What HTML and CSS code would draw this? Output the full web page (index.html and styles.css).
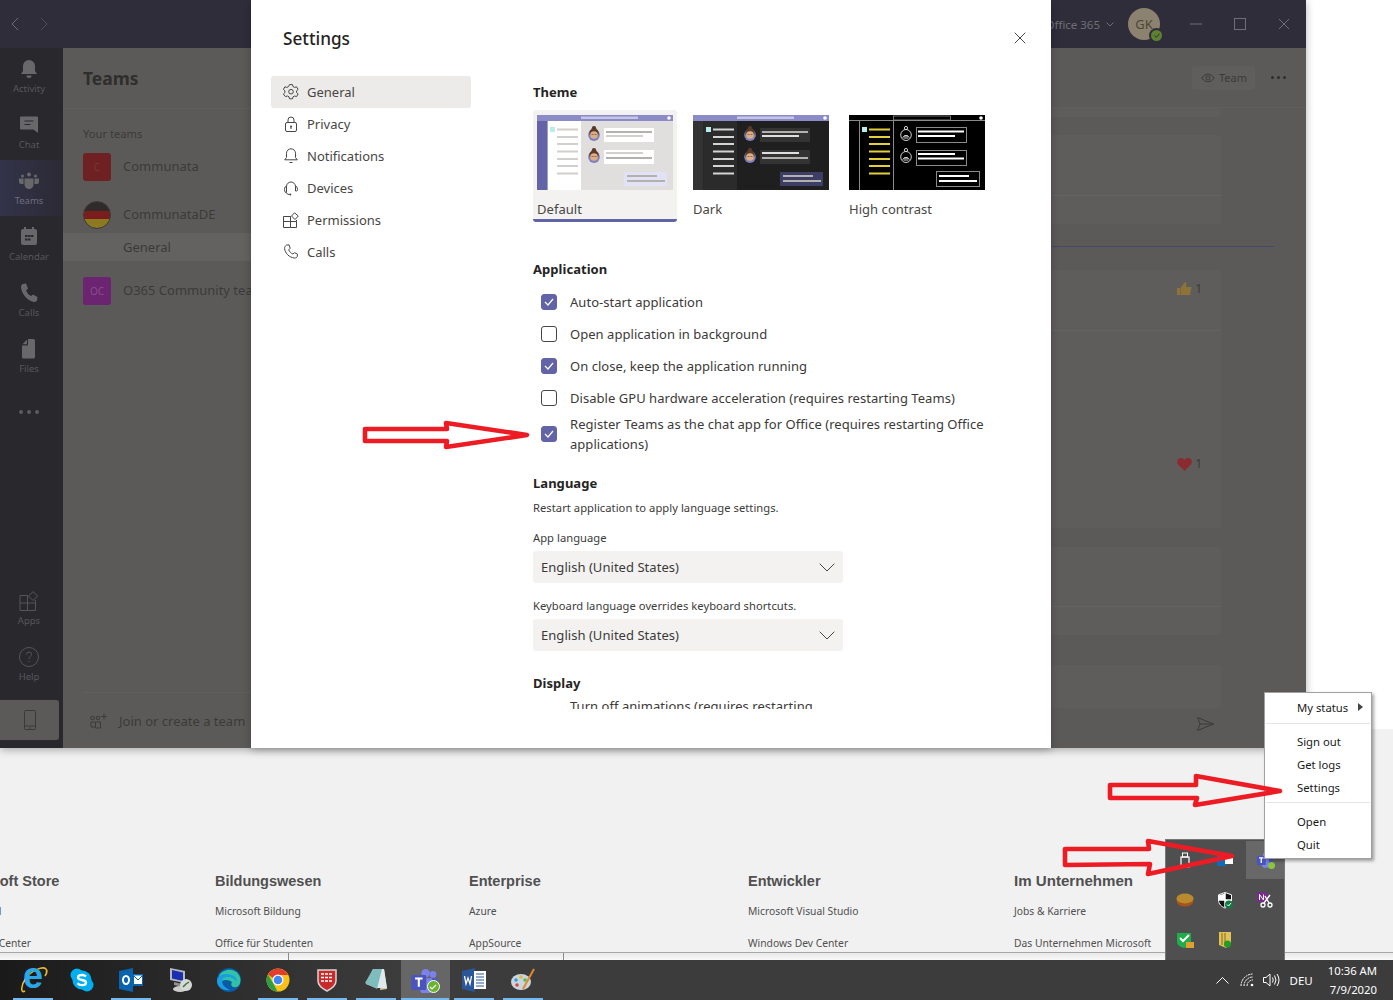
FILE: index.html
```html
<!DOCTYPE html>
<html lang="en">
<head>
<meta charset="utf-8">
<title>Teams settings</title>
<link rel="stylesheet" href="styles.css">
</head>
<body>
<svg class="defs" width="0" height="0" aria-hidden="true">
  <symbol id="avatar" viewBox="0 0 12 15">
    <ellipse cx="6" cy="9" rx="5.800" ry="6" fill="#7f80bd"/>
    <circle cx="6" cy="2.200" r="2.200" fill="#5b3a29"/>
    <circle cx="6" cy="7" r="4.700" fill="#5b3a29"/>
    <ellipse cx="6" cy="9" rx="3.900" ry="3.800" fill="#dcae88"/>
    <path d="M3.500 8.500h2M6.500 8.500h2" stroke="#6a4a38" stroke-width=".7"/>
  </symbol>
  <symbol id="avatar-hc" viewBox="0 0 12 15">
    <circle cx="6" cy="2" r="1.600" fill="none" stroke="#fff" stroke-width=".8"/>
    <ellipse cx="6" cy="9" rx="5.300" ry="5.500" fill="#000" stroke="#fff" stroke-width=".8"/>
    <path d="M2.500 11.500q3.500-4 7 0M4 10h4M3.500 12h5" fill="none" stroke="#fff" stroke-width=".8"/>
  </symbol>
  <symbol id="tm" viewBox="0 0 24 24">
    <circle cx="18.500" cy="6" r="2.700" fill="#7b83eb"/>
    <circle cx="12.500" cy="5" r="3.400" fill="#7b83eb"/>
    <path d="M15 9h7v6.500a3.500 3.500 0 0 1-7 0z" fill="#5059c9"/>
    <path d="M8 9h9.500v9a4.700 4.700 0 0 1-9.500 0z" fill="#7b83eb"/>
    <rect x="1" y="6.500" width="12" height="12" rx="1" fill="#4b53bc"/>
    <path d="M4 9.300h6M7 9.300v6.600" stroke="#fff" stroke-width="1.700" fill="none"/>
  </symbol>
</svg>

<div class="desk">
  <!-- web page behind -->
  <div class="web">
    <div class="web-cols">
      <div class="web-col w1"><h4>Microsoft Store</h4><p>Kontoprofil</p><p>Download Center</p></div>
      <div class="web-col w2"><h4>Bildungswesen</h4><p>Microsoft Bildung</p><p>Office für Studenten</p></div>
      <div class="web-col w3"><h4>Enterprise</h4><p>Azure</p><p>AppSource</p></div>
      <div class="web-col w4"><h4>Entwickler</h4><p>Microsoft Visual Studio</p><p>Windows Dev Center</p></div>
      <div class="web-col w5"><h4>Im Unternehmen</h4><p>Jobs &amp; Karriere</p><p>Das Unternehmen Microsoft</p></div>
    </div>
    <div class="web-scroll"><i class="t1"></i><i class="t2"></i></div>
  </div>

  <!-- Teams window, dimmed -->
  <section class="teams">
    <header class="titlebar">
      <div class="nav-arrows">
        <svg width="8" height="14" viewBox="0 0 8 14"><path d="M7 1 1 7l6 6" class="ln-title"/></svg>
        <svg width="8" height="14" viewBox="0 0 8 14"><path d="m1 1 6 6-6 6" class="ln-title-dim"/></svg>
      </div>
      <div class="title-right">
        <span class="tenant">Office 365</span>
        <svg class="tenant-chev" width="8" height="5" viewBox="0 0 8 5"><path d="m.5.5 3.500 3.500L7.500.5" class="ln-title"/></svg>
        <div class="me">GK<span class="me-dot"><svg width="6" height="5" viewBox="0 0 6 5"><path d="m.5 2.500 1.800 1.800L5.500.7" fill="none" stroke="#2f2d3a"/></svg></span></div>
        <div class="winctl">
          <svg width="12" height="12" viewBox="0 0 12 12"><path d="M0 6h12" class="ln-title"/></svg>
          <svg width="12" height="12" viewBox="0 0 12 12"><rect x=".5" y=".5" width="11" height="11" class="ln-title"/></svg>
          <svg width="12" height="12" viewBox="0 0 12 12"><path d="m1 1 10 10M11 1 1 11" class="ln-title"/></svg>
        </div>
      </div>
    </header>
    <div class="teams-body">
      <nav class="rail">
        <a class="rail-item"><svg viewBox="0 0 20 20" width="20" height="20"><path d="M10 1a6 6 0 0 1 6 6v5l2 3H2l2-3V7a6 6 0 0 1 6-6zM7.500 16.500h5a2.500 2.500 0 0 1-5 0z" class="fl-rail"/></svg><span>Activity</span></a>
        <a class="rail-item"><svg viewBox="0 0 20 20" width="20" height="20"><path d="M1 2.500q0-1 1-1h16q1 0 1 1V18l-4.500-3.500H2q-1 0-1-1z" class="fl-rail"/><path d="M5.500 6h9M5.500 9.500h6" class="ln-cut"/></svg><span>Chat</span></a>
        <a class="rail-item active"><svg viewBox="0 0 20 20" width="20" height="20"><circle cx="10" cy="3.500" r="2" class="fl-rail"/><circle cx="3.500" cy="5" r="1.500" class="fl-rail"/><circle cx="16.500" cy="5" r="1.500" class="fl-rail"/><path d="M5.500 7.500h9v6a4.500 4.500 0 0 1-9 0zM0 7.500h4.500v5.500H2a2 2 0 0 1-2-2zM15.500 7.500H20V11a2 2 0 0 1-2 2h-2.500z" class="fl-rail"/></svg><span>Teams</span></a>
        <a class="rail-item"><svg viewBox="0 0 20 20" width="20" height="20"><path d="M2 4q0-2 2-2h1V0h2v2h6V0h2v2h1q2 0 2 2v12q0 2-2 2H4q-2 0-2-2z" class="fl-rail"/><path d="M6 8h2.500v2H6zM9 8h2.500v2H9zM12 8h2.500v2H12zM6 11.500h2.500v2H6zM9 11.500h2.500v2H9z" class="fl-cut"/></svg><span>Calendar</span></a>
        <a class="rail-item"><svg viewBox="0 0 20 20" width="20" height="20"><path d="M3.500 1 7 .5l2 5-2 2q1.500 4 5 5.500l2-1.500 4.500 2.500-.5 3.500q-1 1.500-3 1.500C8 18 2 10 2 3.500q0-1.500 1.500-2.500z" class="fl-rail"/></svg><span>Calls</span></a>
        <a class="rail-item"><svg viewBox="0 0 20 20" width="20" height="20"><path d="M9 0h5.500q1.500 0 1.500 1.500V18q0 1.500-1.500 1.500h-10Q3 19.500 3 18V6.500h5q1 0 1-1zM3.500 5.200 8 .5v4.700z" class="fl-rail"/></svg><span>Files</span></a>
        <a class="rail-item rail-dots"><i></i><i></i><i></i></a>
        <div class="rail-space"></div>
        <a class="rail-item"><svg viewBox="0 0 20 20" width="20" height="20"><path d="M1 4.500h7.500v15H1zM1 12h15.500v7.500H8.500M8.500 12V4.500M16.500 12V9M9.500 5 14 .7 18.800 5 14 9.500z" class="ln-rail"/></svg><span>Apps</span></a>
        <a class="rail-item"><svg viewBox="0 0 20 20" width="20" height="20"><circle cx="10" cy="10" r="9.500" class="ln-rail"/><path d="M7.500 7.500q0-2.500 2.500-2.500t2.500 2.500c0 2-2.500 2-2.500 4.500M10 14v1" class="ln-rail"/></svg><span>Help</span></a>
        <a class="rail-device"><svg viewBox="0 0 12 20" width="12" height="20"><rect x=".5" y=".5" width="11" height="19" rx="1" class="ln-dark"/><path d="M1 16h10M5 18h2" class="ln-dark"/></svg></a>
      </nav>
      <aside class="list">
        <h2 class="list-title">Teams</h2>
        <div class="list-label">Your teams</div>
        <div class="team t-a"><span class="tile red">C</span>Communata</div>
        <div class="team t-b"><span class="tile flag"></span>CommunataDE</div>
        <div class="channel">General</div>
        <div class="team t-c"><span class="tile purple">OC</span>O365 Community team</div>
        <div class="list-foot">
          <svg width="18" height="16" viewBox="0 0 18 16"><circle cx="2.500" cy="5" r="1.800" class="ln-dark"/><circle cx="8" cy="5" r="1.800" class="ln-dark"/><path d="M5 9H1v5h4M5.500 9h5v6h-5zM14 .5v6M11 3.500h6" class="ln-dark"/></svg>
          <span>Join or create a team</span>
        </div>
      </aside>
      <main class="convo">
        <div class="convo-head">
          <span class="pill"><svg width="14" height="10" viewBox="0 0 14 10"><path d="M.7 5Q7-3 13.300 5 7 13 .7 5z" class="ln-dark"/><circle cx="7" cy="5" r="2" class="ln-dark"/></svg>Team</span>
          <span class="more"><i></i><i></i><i></i></span>
        </div>
        <div class="cards">
          <div class="card c0"></div>
          <div class="card c1"><div class="card-rule"></div></div>
          <div class="new-line"></div>
          <div class="card c2">
            <div class="react r1"><svg width="15" height="14" viewBox="0 0 15 14"><path d="M0 6h3v7H0zM3.500 6 8 0q2 .5 1 5h5.500L13 13H3.500z" fill="#8d7338"/></svg>1</div>
            <div class="card-rule r2"></div>
            <div class="react r3"><svg width="15" height="13" viewBox="0 0 15 13"><path d="M7.500 13 1 6.500C-1.500 3 1.500-.5 4.500 0c1.500.2 2.500 1 3 2 .5-1 1.500-1.800 3-2 3-.5 6 3 3.500 6.500z" fill="#8b2b2f"/></svg>1</div>
          </div>
          <div class="card c3"><div class="card-rule"></div></div>
          <div class="card c4"></div>
        </div>
        <svg class="send" width="17" height="14" viewBox="0 0 17 14"><path d="m.5.5 16 6.500-16 6.500 2.500-6.500zM3 7h13.500" class="ln-dark"/></svg>
      </main>
    </div>
  </section>

  <!-- Settings dialog -->
  <section class="dialog">
    <h1 class="dlg-title">Settings</h1>
    <svg class="dlg-close" width="12" height="12" viewBox="0 0 12 12"><path d="m.7.7 10.600 10.600M11.300.7.700 11.300" class="ln-ink"/></svg>
    <div class="dlg-body">
      <ul class="dlg-nav">
        <li class="on"><svg width="16" height="16" viewBox="0 0 16 16"><path d="M6.500.6h3l.5 2 1.600.8 2-.6 1.500 2.600-1.500 1.400v1.800l1.500 1.400-1.500 2.600-2-.6-1.600.8-.5 2h-3l-.5-2-1.600-.8-2 .6L.4 10l1.500-1.400V6.800L.4 5.400l1.500-2.600 2 .6L5.500 2.600z" class="ln-ink"/><circle cx="8" cy="7.700" r="2.300" class="ln-ink"/></svg>General</li>
        <li><svg width="16" height="16" viewBox="0 0 16 16"><rect x="2.500" y="6.500" width="11" height="9" rx="1.500" class="ln-ink"/><path d="M5 6.500V4a3 3 0 0 1 6 0v2.500" class="ln-ink"/><circle cx="8" cy="10.500" r="1" fill="#484644"/><path d="M8 11v2" class="ln-ink"/></svg>Privacy</li>
        <li><svg width="16" height="16" viewBox="0 0 16 16"><path d="M8 .8a4.500 4.500 0 0 1 4.500 4.500v4.200l1.800 2.300H1.700l1.800-2.300V5.300A4.500 4.500 0 0 1 8 .8zM6.500 14.500h3" class="ln-ink"/></svg>Notifications</li>
        <li><svg width="16" height="16" viewBox="0 0 16 16"><path d="M3.500 12V6.500a4.500 4.500 0 0 1 9 0V9" class="ln-ink"/><path d="M3.500 6.500h-1q-1 1.500-1 3t1 3h1zM12.500 6.500h1q1 1.500 1 3t-1 1.500h-1zM3.500 13q.5 1.500 3 1.500" class="ln-ink"/><circle cx="7.300" cy="14.500" r="1" fill="#484644"/></svg>Devices</li>
        <li><svg width="16" height="16" viewBox="0 0 16 16"><path d="M.5 4.500h7v11h-7zM.5 9.500h13v6h-6M7.500 9.500v-5M13.500 9.500V8M8.500 4 11.500.8 15.300 4l-3.300 3.500z" class="ln-ink"/></svg>Permissions</li>
        <li><svg width="16" height="16" viewBox="0 0 16 16"><path d="M3.500 1 6 .8l1.200 3.400-1.500 1.600c.8 2 2.200 3.400 4.200 4.200l1.600-1.300 3 1.500-.3 2.500c-.5 1-1.500 1.500-2.700 1.300C6 13.500 2 9 1.600 4.500 1.500 3 2.300 1.800 3.500 1z" class="ln-ink"/></svg>Calls</li>
      </ul>
      <div class="dlg-content">
        <h3 class="h-theme">Theme</h3>
        <div class="themes">
          <div class="theme on">
            <svg class="thumb" viewBox="0 0 136 75" width="136" height="75">
              <rect width="136" height="75" fill="#e1dfdd"/><rect width="136" height="6" fill="#8b8cc7"/><rect x="44" y="1.500" width="57" height="2.500" fill="#c5c6e8"/><circle cx="132" cy="3" r="1.800" fill="#fff"/>
              <rect y="6" width="10.500" height="69" fill="#6264a7"/><rect x="11" y="6" width="33" height="69" fill="#fff"/>
              <rect x="13" y="12" width="5" height="5" fill="#b8eeee"/>
              <path d="M20 14.500h21M20 22h21M20 29h21M20 36.500h21M20 44h21M20 51h21M20 58.500h21" stroke="#d2d0ce" stroke-width="2"/>
              <use href="#avatar" x="51" y="11" width="12" height="15"/><use href="#avatar" x="51" y="33" width="12" height="15"/>
              <rect x="67" y="13" width="50" height="14" fill="#fff"/><rect x="67" y="35" width="50" height="14" fill="#fff"/><rect x="87" y="57" width="43" height="14" fill="#e2e2f6"/>
              <path d="M69 17h46M69 43h46M90 61h30M90 66h38" stroke="#b3b0ad" stroke-width="2"/><path d="M69 21h37M69 38h37" stroke="#d2d0ce" stroke-width="2"/>
            </svg>
            <span>Default</span>
          </div>
          <div class="theme">
            <svg class="thumb" viewBox="0 0 136 75" width="136" height="75">
              <rect width="136" height="75" fill="#1f1f1f"/><rect width="136" height="6" fill="#8b8cc7"/><rect x="44" y="1.500" width="57" height="2.500" fill="#c5c6e8"/><circle cx="132" cy="3" r="1.800" fill="#fff"/>
              <rect y="6" width="10.500" height="69" fill="#333"/><rect x="11" y="6" width="33" height="69" fill="#2b2b2b"/>
              <rect x="13" y="12" width="5" height="5" fill="#b8eeee"/>
              <path d="M20 14.500h21M20 22h21M20 29h21M20 36.500h21M20 44h21M20 51h21M20 58.500h21" stroke="#d6d4d2" stroke-width="2"/>
              <use href="#avatar" x="51" y="11" width="12" height="15"/><use href="#avatar" x="51" y="33" width="12" height="15"/>
              <rect x="67" y="13" width="50" height="14" fill="#333"/><rect x="67" y="35" width="50" height="14" fill="#333"/><rect x="87" y="57" width="43" height="14" fill="#3d3e66"/>
              <path d="M69 17h46M69 43h46M90 61h30M90 66h38" stroke="#b3b0ad" stroke-width="2"/><path d="M69 21h37M69 38h37" stroke="#e1dfdd" stroke-width="2"/>
            </svg>
            <span>Dark</span>
          </div>
          <div class="theme">
            <svg class="thumb" viewBox="0 0 136 75" width="136" height="75">
              <rect width="136" height="75" fill="#000"/><path d="M0 5.500h136M10.500 6v69M44.500 6v69" stroke="#8a8a8a"/><rect x="44.500" y="1" width="57" height="4" fill="none" stroke="#8a8a8a" stroke-width=".8"/><circle cx="132" cy="3" r="1.800" fill="#fff"/>
              <rect x="13" y="12" width="5" height="5" fill="#b8eeee"/>
              <path d="M20 14.500h21M20 22h21M20 29h21M20 36.500h21M20 44h21M20 51h21M20 58.500h21" stroke="#e3cf3c" stroke-width="2"/>
              <use href="#avatar-hc" x="51" y="11" width="12" height="15"/><use href="#avatar-hc" x="51" y="33" width="12" height="15"/>
              <rect x="67.500" y="12.500" width="50" height="15" fill="none" stroke="#8a8a8a"/><rect x="67.500" y="35.500" width="50" height="15" fill="none" stroke="#8a8a8a"/><rect x="87.500" y="56.500" width="43" height="15" fill="none" stroke="#8a8a8a"/>
              <path d="M69 16.500h46M69 21h37M69 39h37M69 43.500h46M90 61h30M90 66h38" stroke="#fff" stroke-width="2"/>
            </svg>
            <span>High contrast</span>
          </div>
        </div>

        <h3 class="h-app">Application</h3>
        <div class="opts">
          <label class="opt"><span class="cb on"><svg width="10" height="8" viewBox="0 0 10 8"><path d="m1 4 3 3 5-6" class="ln-check"/></svg></span>Auto-start application</label>
          <label class="opt"><span class="cb"></span>Open application in background</label>
          <label class="opt"><span class="cb on"><svg width="10" height="8" viewBox="0 0 10 8"><path d="m1 4 3 3 5-6" class="ln-check"/></svg></span>On close, keep the application running</label>
          <label class="opt"><span class="cb"></span>Disable GPU hardware acceleration (requires restarting Teams)</label>
          <label class="opt two"><span class="cb on"><svg width="10" height="8" viewBox="0 0 10 8"><path d="m1 4 3 3 5-6" class="ln-check"/></svg></span><span>Register Teams as the chat app for Office (requires restarting Office applications)</span></label>
        </div>

        <h3 class="h-lang">Language</h3>
        <p class="small s-restart">Restart application to apply language settings.</p>
        <p class="small s-app">App language</p>
        <div class="select">English (United States)<svg width="16" height="9" viewBox="0 0 16 9"><path d="m.7.7 7.300 7.300L15.300.7" class="ln-ink"/></svg></div>
        <p class="small s-kbd">Keyboard language overrides keyboard shortcuts.</p>
        <div class="select">English (United States)<svg width="16" height="9" viewBox="0 0 16 9"><path d="m.7.7 7.300 7.300L15.300.7" class="ln-ink"/></svg></div>
        <h3 class="h-disp">Display</h3>
        <label class="opt last"><span class="cb"></span><span class="last-text">Turn off animations (requires restarting Teams)</span></label>
      </div>
    </div>
  </section>

  <!-- Tray overflow -->
  <div class="tray">
    <div class="tray-cell"><svg width="10" height="16" viewBox="0 0 10 16"><rect x="1" y="5" width="8" height="10" fill="none" stroke="#fff" stroke-width="1.200"/><rect x="2.500" y="1" width="5" height="4" fill="none" stroke="#fff"/></svg></div>
    <div class="tray-cell"><svg width="16" height="14" viewBox="0 0 16 14"><rect y="3" width="9" height="10" fill="#0f6cbd"/><rect x="8" y="5" width="8" height="6" fill="#fff"/><rect x="5" width="7" height="5" fill="#28a8ea"/></svg></div>
    <div class="tray-cell on"><svg class="tm" width="18" height="18"><use href="#tm"/></svg><span class="tm-ok"></span></div>
    <div class="tray-cell"><svg width="18" height="14" viewBox="0 0 18 14"><ellipse cx="9" cy="8" rx="8.500" ry="5.500" fill="#a9521b"/><ellipse cx="9" cy="5.500" rx="8.500" ry="5" fill="#b98a2e"/></svg></div>
    <div class="tray-cell"><svg width="16" height="17" viewBox="0 0 16 17"><path d="M8 .5l6.500 2.300V8c0 4-3 6.700-6.500 8-3.500-1.300-6.500-4-6.500-8V2.800z" fill="#111" stroke="#fff"/><path d="M8 1v14M1.500 8h13" stroke="#fff" stroke-width="1.500"/><path d="M8 1.500 2 3.200V8h6zM8 8h6c0 3-3 6-6 7.500z" fill="#fff"/><circle cx="12" cy="12.500" r="4" fill="#107c41"/><path d="m10 12.500 1.500 1.500 2.500-3" stroke="#fff" fill="none"/></svg></div>
    <div class="tray-cell"><svg width="16" height="16" viewBox="0 0 16 16"><rect width="10" height="10" fill="#7b2a8f"/><path d="M2.500 8V2.500L6.500 8V2.500" stroke="#fff" fill="none"/><circle cx="6" cy="13" r="2" fill="none" stroke="#fff" stroke-width="1.300"/><circle cx="13" cy="13" r="2" fill="none" stroke="#fff" stroke-width="1.300"/><path d="m7 11 6-8M12 11 8 4" stroke="#fff" stroke-width="1.300"/></svg></div>
    <div class="tray-cell"><svg width="17" height="17" viewBox="0 0 17 17"><path d="M0 1h14v9c0 3-3 5-7 6-4-1-7-3-7-6z" fill="#1fae4b"/><path d="m3 6 3 3 6-6" stroke="#fff" stroke-width="2" fill="none"/><rect x="9" y="10" width="8" height="6" fill="#e0a030"/></svg></div>
    <div class="tray-cell"><svg width="14" height="17" viewBox="0 0 14 17"><path d="M1 0h12v11l-5 5-7-3z" fill="#e0c25a"/><path d="M4 1v12M7 1v13" stroke="#8a6a1c"/><circle cx="9.500" cy="12" r="3.500" fill="#1f9e20"/></svg></div>
  </div>

  <!-- Context menu -->
  <div class="menu">
    <div class="mi status">My status<i class="mi-arrow"></i></div>
    <hr>
    <div class="mi">Sign out</div>
    <div class="mi">Get logs</div>
    <div class="mi">Settings</div>
    <hr class="hr2">
    <div class="mi">Open</div>
    <div class="mi">Quit</div>
  </div>

  <!-- Taskbar -->
  <footer class="taskbar">
    <div class="apps">
      <div class="app run"><svg class="ie-ring" width="32" height="32" viewBox="0 0 32 32"><path d="M7 27C2 30 3 21 8 14 14 6 25 2 28 5c1 1 1 4-1 7" fill="none" stroke="#e4b92e" stroke-width="1.600"/></svg><span class="ie">e</span></div>
      <div class="app"><svg width="24" height="24" viewBox="0 0 24 24"><circle cx="7" cy="7" r="6.500" fill="#00aff0"/><circle cx="17" cy="17" r="6.500" fill="#00aff0"/><circle cx="12" cy="12" r="9.500" fill="#00aff0"/><path d="M16 8.500Q14.500 7 12 7 8 7 8 9.500c0 3.500 8 1.500 8 5 0 2.300-2.500 2.700-4 2.700q-3 0-4.500-2" stroke="#fff" stroke-width="2.300" fill="none"/></svg></div>
      <div class="app run"><svg width="24" height="24" viewBox="0 0 24 24"><path d="M0 3 14 0v24L0 21z" fill="#0a64ad"/><rect x="13" y="6" width="11" height="12" fill="#0a64ad"/><rect x="15" y="7.500" width="8" height="8.500" fill="#fff"/><path d="m15 8 4 4 4-4" stroke="#0a64ad" fill="none"/><ellipse cx="7" cy="12" rx="3" ry="4" fill="none" stroke="#fff" stroke-width="2"/></svg></div>
      <div class="app"><svg width="24" height="26" viewBox="0 0 24 26"><path d="M2 1l15 3v12L2 13z" fill="#b5b9c2"/><path d="M4 3l11 2.500v8.500L4 11.500z" fill="#1b2fb0"/><path d="M6 15l8 2v3l-8-2z" fill="#8f8f8f"/><ellipse cx="12" cy="22" rx="7" ry="3" fill="#ccc"/><circle cx="18" cy="18" r="6" fill="#d8d8d8"/><path d="m15 20 3-3 3-2" stroke="#2d7d32" stroke-width="1.500" fill="none"/></svg></div>
      <div class="app"><svg width="24" height="24" viewBox="0 0 24 24"><circle cx="12" cy="12" r="12" fill="#0c59a4"/><path d="M2 8C5 1 17-1 22 7c3 5 1 12-3 12-4 1-6-2-4-5-4-3-10-3-13 2z" fill="#2fc4a7"/><path d="M0 13c0-5 5-7 9-7 5 0 11 2 11 8-2-3-5-5-9-5-6 0-8 5-3 10 1 1 3 2 5 3C6 23 0 19 0 13z" fill="#1b9de2"/></svg></div>
      <div class="app run"><svg width="24" height="24" viewBox="0 0 24 24"><circle cx="12" cy="12" r="11.500" fill="#fbc116"/><path d="M2 6.500A11.500 11.500 0 0 1 22.300 7H12a5.500 5.500 0 0 0-5 3z" fill="#e33b2e"/><path d="M2 6.500l5 8.500 4.500 8.500A11.500 11.500 0 0 1 2 6.500z" fill="#2b9f45"/><circle cx="12" cy="12" r="5.500" fill="#fff"/><circle cx="12" cy="12" r="4.300" fill="#4285f4"/></svg></div>
      <div class="app run"><svg width="20" height="24" viewBox="0 0 20 24"><path d="M1 2h18v11c0 5-5 8-9 10-4-2-9-5-9-10z" fill="#c92a2a" stroke="#d5d5d5" stroke-width="1.500"/><path d="M4 6h12M4 9.500h12M4 13h12" stroke="#fff" stroke-width="1.600" stroke-dasharray="3 1"/></svg></div>
      <div class="app run"><svg width="24" height="24" viewBox="0 0 24 24"><path d="M20 1l3 20-7 1z" fill="#d9c89a"/><path d="M9 1h11l3 19H12L2 16z" fill="#dfe9ec"/><path d="M9 1 1 15l12 6L18 1z" fill="#7fbcbc"/></svg></div>
      <div class="app run on"><svg class="tm" width="30" height="26" viewBox="0 0 24 21"><use href="#tm" width="24" height="24"/></svg><span class="tm-ok big"><svg width="8" height="6" viewBox="0 0 8 6"><path d="m1 3 2 2 4-4" fill="none" stroke="#fff" stroke-width="1.200"/></svg></span></div>
      <div class="app run"><svg width="24" height="24" viewBox="0 0 24 24"><path d="M0 3 13 0v24L0 21z" fill="#2b579a"/><rect x="12" y="3" width="12" height="18" fill="#fff"/><path d="M14 6h8M14 9h8M14 12h8M14 15h8M14 18h8" stroke="#2b579a"/><path d="m2.500 8 1.500 8 2-6 2 6 1.500-8" stroke="#fff" stroke-width="1.300" fill="none"/></svg></div>
      <div class="app run"><svg width="24" height="24" viewBox="0 0 24 24"><ellipse cx="10" cy="14" rx="10" ry="8" fill="#c9d6de"/><circle cx="5" cy="12" r="1.800" fill="#3a9ad9"/><circle cx="10" cy="9" r="1.800" fill="#e8b93a"/><circle cx="6" cy="17" r="1.800" fill="#d44"/><circle cx="14" cy="12" r="1.800" fill="#5b5"/><path d="M23 1 12 21" stroke="#e08a2a" stroke-width="2"/></svg></div>
    </div>
    <div class="sys">
      <svg width="13" height="8" viewBox="0 0 13 8"><path d="m.5 7.500 6-6 6 6" class="ln-white"/></svg>
      <svg class="s-wifi" width="14" height="14" viewBox="0 0 14 14"><path d="M1 13A12 12 0 0 1 13 1M4 13a9 9 0 0 1 9-9M7 13a6 6 0 0 1 6-6" class="ln-white-dot"/><circle cx="12" cy="12" r="1.300" fill="#fff"/></svg>
      <svg class="s-vol" width="17" height="14" viewBox="0 0 17 14"><path d="M.5 4.500H3L7 1v12L3 9.500H.5zM9.500 4.500q1.500 2.500 0 5M11.500 2.500q3 4.500 0 9M14 1q4 6 0 12" class="ln-white"/></svg>
      <span class="s-lang">DEU</span>
      <div class="clock"><span>10:36 AM</span><span>7/9/2020</span></div>
    </div>
  </footer>

  <!-- Red annotation arrows -->
  <svg class="arrows" width="1393" height="1000" viewBox="0 0 1393 1000" aria-hidden="true">
    <path d="M365 429h82l-1-6 81 12-81 12 1-6h-82z"/>
    <path d="M1110 785h86v-9l84 15-85 14 2-7h-87z"/>
    <path d="M1065 849h84l-1-8 84 15-84 18 2-10-85 1z"/>
  </svg>
</div>
</body>
</html>
```

FILE: styles.css
```css
* { box-sizing: border-box; }
html, body { margin: 0; padding: 0; background: #fff; }
body { font-family: "Noto Sans", "Open Sans", sans-serif; color: #252423; }
.defs { position: absolute; }
.desk { position: relative; width: 1393px; height: 1000px; overflow: hidden; background: #fff; }
h1, h2, h3, h4, p, ul { margin: 0; padding: 0; font-weight: normal; }
ul { list-style: none; }

/* stroke helpers */
.ln-title { fill: none; stroke: #6f6e76; }
.ln-title-dim { fill: none; stroke: #4f4e58; }
.ln-rail { fill: none; stroke: #565559; stroke-width: 1; }
.ln-dark { fill: none; stroke: #3b3a39; }
.ln-ink { fill: none; stroke: #484644; }
.ln-check { fill: none; stroke: #fff; stroke-width: 1.200; }
.ln-white { fill: none; stroke: #fff; }
.ln-white-dot { fill: none; stroke: #fff; stroke-dasharray: 2 .7; }
.ln-cut { fill: none; stroke: #29282d; stroke-width: 1.200; }
.fl-rail { fill: #68686b; }
.fl-cut { fill: #29282d; }

/* page behind */
.web { position: absolute; left: 0; right: 0; top: 729px; height: 231px; background: #f1f1f1; }
.web-cols { display: flex; padding-top: 142px; margin-left: -47px; }
.web-col h4 { font-family: "Liberation Sans", sans-serif; font-weight: bold; font-size: 14.500px; line-height: 20px; color: #505050; white-space: nowrap; }
.web-col p { font-size: 10.300px; line-height: 14px; color: #505050; white-space: nowrap; }
.web-col p:nth-of-type(1) { margin-top: 13px; }
.web-col p:nth-of-type(2) { margin-top: 18px; }
.w1 { width: 262px; } .w2 { width: 254px; } .w3 { width: 279px; } .w4 { width: 266px; }
.w1 p { margin-left: -6px; }
.web-col.w5 h4 { font-size: 15.100px; }
.web-scroll { position: absolute; left: 0; right: 0; bottom: 0; height: 8px; border-top: 1px solid #a6a6a6; background: linear-gradient(#e9e9e9, #f8f8f8); }
.web-scroll i { position: absolute; top: 0; bottom: 0; width: 1px; background: #8c8c8c; }
.t1 { left: 288px; } .t2 { left: 563px; }

/* Teams window */
.teams { position: absolute; left: 0; top: 0; width: 1306px; height: 748px; display: flex; flex-direction: column; background: #5b5a58; box-shadow: 0 2px 8px rgba(0,0,0,.3); }
.titlebar { height: 48px; background: #2f2d3a; display: flex; align-items: center; justify-content: space-between; padding-left: 11px; color: #6f6e76; }
.nav-arrows { display: flex; gap: 21px; }
.title-right { display: flex; align-items: center; }
.tenant { font-size: 11.500px; }
.tenant-chev { margin: 0 14px 0 6px; }
.me { width: 32px; height: 32px; border-radius: 50%; background: #8c8270; color: #4f4636; font-size: 13px; display: flex; align-items: center; justify-content: center; position: relative; }
.me-dot { position: absolute; right: -2px; bottom: -1px; width: 11px; height: 11px; border-radius: 50%; background: #5d8131; box-shadow: 0 0 0 2px #2f2d3a; display: flex; align-items: center; justify-content: center; }
.winctl { display: flex; gap: 32px; margin: 0 16px 0 30px; }
.teams-body { flex: 1; display: flex; min-height: 0; }
.rail { width: 63px; background: #29282d; display: flex; flex-direction: column; }
.rail-item { height: 56px; width: 58px; display: flex; flex-direction: column; align-items: center; padding-top: 11px; font-size: 9.500px; color: #58575c; line-height: 13px; gap: 3px; }
.rail-item.active { width: 63px; padding-right: 5px; background: linear-gradient(90deg, #33334a, #2b2a34); color: #6c6d80; }
.rail-dots { flex-direction: row; justify-content: center; align-items: flex-start; padding-top: 26px; gap: 4px; }
.rail-dots i { width: 4px; height: 4px; border-radius: 50%; background: #5c5b60; }
.rail-space { flex: 1; }
.rail-device { height: 40px; width: 59px; margin: 8px 0 8px; background: #5b5a59; border-radius: 0 3px 3px 0; display: flex; align-items: center; justify-content: center; }
.list { width: 320px; display: flex; flex-direction: column; padding-left: 20px; color: #3b3a39; position: relative; }
.list-title { font-size: 17.500px; font-weight: 700; line-height: 24px; margin-top: 18px; padding-bottom: 18px; margin-left: -20px; padding-left: 20px; border-bottom: 1px solid #605f5d; color: #2f2e2d; }
.list-label { font-size: 11.200px; line-height: 16px; margin-top: 17px; }
.team { display: flex; align-items: center; gap: 12px; font-size: 13px; white-space: nowrap; height: 28px; padding-bottom: 2px; }
.t-a { margin-top: 11px; }
.t-b { margin-top: 20px; }
.t-c { margin-top: 16px; }
.tile { width: 28px; height: 28px; border-radius: 3px; display: flex; align-items: center; justify-content: center; font-size: 10px; flex: none; }
.team > .tile { margin-top: 2px; }
.red { background: #6e2022; color: #7f3436; }
.purple { background: #6b2470; color: #8a4a8e; }
.team > .flag { border-radius: 50%; background: linear-gradient(#2f2b28 0 35%, #7a1d1c 35% 65%, #8c7a20 65%); border: 1px solid #3b3a39; }
.channel { margin: 4px 0 0 -20px; padding-left: 60px; height: 28px; line-height: 28px; font-size: 13px; background: #636260; }
.list-foot { margin-top: auto; margin-left: 0; height: 56px; border-top: 1px solid #605f5d; display: flex; align-items: center; gap: 11px; padding-left: 7px; font-size: 13px; white-space: nowrap; }
.convo { flex: 1; display: flex; flex-direction: column; position: relative; }
.convo-head { height: 60px; display: flex; align-items: center; justify-content: flex-end; gap: 16px; padding: 0 20px 0 0; border-bottom: 1px solid #605f5d; }
.pill { height: 24px; padding: 0 8px 0 9px; width: 63px; background: #5f5e5c; border-radius: 3px; display: flex; align-items: center; gap: 4px; font-size: 11px; color: #3b3a39; }
.more { display: flex; gap: 3px; }
.more i { width: 3px; height: 3px; border-radius: 50%; background: #2e2d2c; }
.cards { padding-right: 85px; }
.card { background: #5e5d5b; border-radius: 3px; position: relative; }
.card-rule { position: absolute; left: 0; right: 0; height: 1px; background: #646361; }
.c0 { height: 9px; margin-top: 0; }
.c1 { height: 89px; margin-top: 18px; }
.c1 .card-rule { top: 60px; }
.new-line { height: 1px; background: #47476e; margin: 22px -53px 0 0; }
.c2 { height: 258px; margin-top: 23px; }
.r2 { top: 60px; }
.react { position: absolute; left: 0; right: 0; display: flex; justify-content: flex-end; align-items: center; gap: 3px; padding-right: 19px; font-size: 12px; color: #3b3a39; line-height: 16px; }
.r1 { top: 11px; }
.r3 { top: 186px; }
.c3 { height: 88px; margin-top: 19px; }
.c3 .card-rule { top: 59px; }
.c4 { height: 43px; margin-top: 30px; }
.send { position: absolute; right: 92px; bottom: 17px; }

/* Dialog */
.dialog { position: absolute; left: 251px; top: 0; width: 800px; height: 748px; background: #fff; padding: 0 20px; box-shadow: 0 2px 8px rgba(0,0,0,.25); }
.dlg-title { font-size: 17.200px; font-weight: 500; line-height: 26px; padding: 26px 0 0 12px; color: #252423; }
.dlg-close { position: absolute; right: 25px; top: 32px; }
.dlg-body { display: flex; margin-top: 24px; height: 633px; }
.dlg-nav { width: 200px; flex: none; font-size: 13px; color: #484644; }
.dlg-nav li { height: 32px; display: flex; align-items: center; gap: 8px; padding-left: 12px; border-radius: 3px; }
.dlg-nav li.on { background: #edebe9; }
.dlg-content { margin-left: 62px; width: 465px; overflow: hidden; font-size: 13px; letter-spacing: .04px; color: #3b3a39; }
h3 { font-size: 13px; font-weight: 700; line-height: 20px; color: #252423; }
.h-theme { margin-top: 6px; }
.themes { display: flex; gap: 12px; margin-top: 8px; }
.theme { width: 144px; height: 112px; padding: 5px 4px 0; border-radius: 3px; border-bottom: 3px solid transparent; line-height: 20px; color: #484644; }
.theme.on { background: #f3f2f1; border-bottom-color: #6264a7; color: #484644; }
.thumb { display: block; margin-bottom: 9px; }
.h-app { margin-top: 37px; }
.opts { margin-top: 7px; display: flex; flex-direction: column; }
.opt { display: flex; align-items: center; height: 32px; padding-left: 8px; white-space: nowrap; }
.cb { width: 16px; height: 16px; flex: none; border: 1px solid #484644; border-radius: 3px; margin-right: 13px; display: flex; align-items: center; justify-content: center; }
.cb.on { background: #6264a7; border-color: #6264a7; }
.opt.two { height: 40px; margin-top: 0; white-space: normal; line-height: 20px; }
.h-lang { margin-top: 19px; }
.small { font-size: 11.200px; line-height: 16px; color: #3b3a39; }
.s-restart { margin-top: 7px; }
.s-app { margin-top: 14px; }
.s-kbd { margin-top: 15px; }
.select { width: 310px; height: 32px; margin-top: 5px; padding: 0 8px; background: #f3f2f1; border-radius: 3px; display: flex; align-items: center; justify-content: space-between; color: #3b3a39; }
.h-disp { margin-top: 22px; }
.opt.last { height: 40px; margin-top: 3px; align-items: flex-start; white-space: normal; line-height: 20px; }
.opt.last .cb { visibility: hidden; }
.last-text { width: 262px; }

/* Tray overflow */
.tray { position: absolute; left: 1165px; top: 839px; width: 120px; height: 121px; background: #4f4f4f; box-shadow: inset 1px 0 #777, inset -1px 0 #777, inset 0 1px #777; padding-top: 1px; display: grid; grid-template-columns: repeat(3, 40px); grid-auto-rows: 40px; }
.tray-cell { display: flex; align-items: center; justify-content: center; position: relative; }
.tray-cell.on { background: #686868; margin: 1px; }
.tm-ok { position: absolute; right: 9px; bottom: 10px; width: 7px; height: 7px; border-radius: 50%; background: #8cc63f; }
.tm-ok.big { right: 10px; bottom: 7px; width: 13px; height: 13px; background: #6bb52e; border: 1px solid #fff; display: flex; align-items: center; justify-content: center; }

/* Context menu */
.menu { position: absolute; left: 1264px; top: 692px; width: 108px; height: 167px; background: #fff; border: 1px solid #a0a0a0; box-shadow: 2px 2px 3px rgba(0,0,0,.35); padding: 4px 1px 0; font-size: 11.300px; color: #1a1a1a; }
.mi { height: 23px; line-height: 23px; padding-left: 31px; position: relative; }
.menu hr { border: 0; height: 1px; background: #e4e4e4; margin: 3px 0 6px; }
.menu hr.hr2 { margin-bottom: 7px; }
.mi.status { line-height: 22px; }
.mi-arrow { position: absolute; right: 7px; top: 6px; border-left: 5px solid #444; border-top: 4px solid transparent; border-bottom: 4px solid transparent; }

/* Taskbar */
.taskbar { position: absolute; left: 0; right: 0; bottom: 0; height: 40px; background: linear-gradient(90deg, #1a1a1a, #3c3c3c 400px, #3c3c3c); display: flex; justify-content: space-between; color: #fff; }
.apps { display: flex; padding-left: 8.500px; }
.app { width: 49px; height: 40px; display: flex; align-items: center; justify-content: center; position: relative; }
.app.run::after { content: ""; position: absolute; left: 4.500px; right: 4.500px; bottom: 0; height: 2px; background: #76b9ed; }
.app.on { background: #666; }
.app.on::after { left: 0; right: 1px; }
.ie { position: relative; font-family: "Liberation Sans", sans-serif; font-size: 36px; font-weight: 700; color: #2aa7e8; line-height: 32px; margin-top: -8px; }
.ie-ring { position: absolute; left: 9px; top: 4px; }
.sys { display: flex; align-items: center; padding-right: 16px; font-size: 12px; }
.s-wifi { margin-left: 11px; }
.s-vol { margin-left: 9px; }
.s-lang { margin-left: 10px; font-size: 11.500px; }
.clock { margin-left: 15px; display: flex; flex-direction: column; align-items: flex-end; line-height: 19px; font-size: 11.300px; }

/* arrows */
.arrows { position: absolute; left: 0; top: 0; pointer-events: none; }
.arrows path { fill: none; stroke: #ed1c24; stroke-width: 4.600; stroke-linejoin: round; }
```
